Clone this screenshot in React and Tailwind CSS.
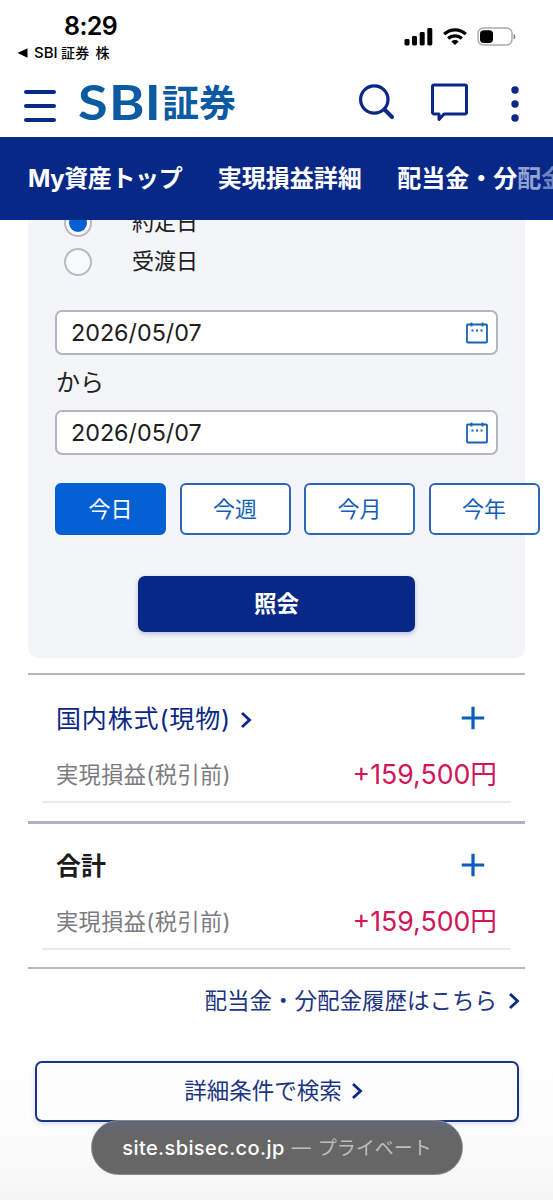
import React from "react";

const JP = "font-['Inter','Noto_Sans_CJK_JP',sans-serif]";

function StatusBar() {
  return (
    <div className="flex h-[70px] justify-between">
      <div className="pl-[17px] pt-[11px] text-black">
        <div className="pl-[47px] text-[25px] font-semibold leading-[30px] tracking-[-0.6px]">8:29</div>
        <div className="flex items-center whitespace-nowrap text-[14px] font-medium leading-[24px]">
          <svg width="11" height="10" viewBox="0 0 11 10" className="mr-[6px]">
            <path d="M0.5 5 10.5 0.3v9.4Z" fill="#000" />
          </svg>
          <span className="w-[27px] text-[15px]">SBI</span>
          <span className="tracking-[0.2px]">証券</span>
          <span className="ml-[6px]">株</span>
        </div>
      </div>
      <div className="flex items-start gap-[10px] pr-[37px] pt-[27px]">
        <svg width="29" height="19" viewBox="0 0 29 19" fill="#000">
          <rect x="0.5" y="12" width="5" height="6.5" rx="1.4" />
          <rect x="8" y="9" width="5" height="9.5" rx="1.4" />
          <rect x="15.7" y="5" width="5" height="13.5" rx="1.4" />
          <rect x="23.3" y="1" width="5" height="17.500" rx="1.4" />
        </svg>
        <svg width="24" height="19" viewBox="0 0 24 19" fill="none" stroke="#000" strokeWidth="3.2">
          <path d="M1.2 7.2a15.5 15.5 0 0 1 21.6 0" />
          <path d="M5.2 11.600a9.8 9.8 0 0 1 13.6 0" />
          <path d="M12 18 8.4 14.4a5.2 5.2 0 0 1 7.2 0Z" fill="#000" stroke="none" />
        </svg>
        <svg width="39" height="20" viewBox="0 0 39 20">
          <rect x="1" y="1" width="34" height="17" rx="5.5" fill="#fff" stroke="#aaa" strokeWidth="1.4" />
          <rect x="3" y="3.3" width="13" height="12.6" rx="3.6" fill="#000" />
          <path d="M37 7.5q2 2 0 4.500Z" fill="#888" stroke="#888" />
        </svg>
      </div>
    </div>
  );
}

function Header() {
  return (
    <header className="flex h-[67px] items-start pl-[24px]">
      <button className="mt-[20px] flex w-[32px] flex-col gap-[10px]" aria-label="メニュー">
        <span className="h-1 w-full rounded-full bg-[#0a2885]" />
        <span className="h-1 w-full rounded-full bg-[#0a2885]" />
        <span className="h-1 w-full rounded-full bg-[#0a2885]" />
      </button>
      <div className="ml-[22px] flex w-[160px] items-start whitespace-nowrap text-[#0b5aa2]">
        <span className="flex w-[84px] origin-left scale-x-[1.15] font-['Lato'] text-[47px] font-bold leading-[64px]">
          <span className="w-[27px]">S</span>
          <span className="w-[31px]">B</span>
          <span>I</span>
        </span>
        <span className="font-['Noto_Sans_CJK_JP'] text-[37px] font-bold leading-[62px]">証券</span>
      </div>
      <svg width="37" height="38" viewBox="0 0 37 38" className="ml-[120px] mt-[14px]" fill="none" stroke="#0a2885" strokeWidth="3.2" strokeLinecap="round">
        <circle cx="16.300" cy="15.500" r="13.700" />
        <path d="m26.500 25.500 7.500 7.500" strokeWidth="4" />
      </svg>
      <svg width="38" height="40" viewBox="0 0 38 40" className="ml-[35px] mt-[13px]" fill="none" stroke="#0a2885" strokeWidth="3" strokeLinejoin="round">
        <path d="M4 2h31a1.500 1.500 0 0 1 1.500 1.500v26a1.500 1.500 0 0 1-1.500 1.500H14l-5 5.500V31H4a1.500 1.500 0 0 1-1.500-1.500v-26A1.500 1.500 0 0 1 4 2Z" />
      </svg>
      <svg width="8" height="38" viewBox="0 0 8 38" className="ml-[43px] mt-[15px]" fill="#0a2885">
        <circle cx="4" cy="5" r="3.700" />
        <circle cx="4" cy="19" r="3.700" />
        <circle cx="4" cy="33" r="3.700" />
      </svg>
    </header>
  );
}

function Nav() {
  return (
    <nav className="relative z-10 flex h-[83px] items-center gap-[35.500px] overflow-hidden whitespace-nowrap bg-[#082887] pl-[28px] pt-[1px] text-[24px] font-bold leading-[36px] text-white">
      <span className="w-[155px] tracking-[-0.4px]">My資産トップ</span>
      <span className="w-[144px]">実現損益詳細</span>
      <span>
        配当金・分<span className="text-[#94a3d2]">配</span><span className="text-[#6f83bf]">金</span>
      </span>
    </nav>
  );
}

function Radio({ label, checked }) {
  return (
    <label className="flex h-[39px] items-center">
      <span className="flex size-[28px] items-center justify-center rounded-full border-2 border-[#b9b9c6] bg-[#f8f9fb]">
        {checked && <span className="size-[18px] rounded-full bg-[#0360d2]" />}
      </span>
      <span className="ml-[40px] text-[22px]">{label}</span>
    </label>
  );
}

function DateField({ value }) {
  return (
    <div className="flex h-[45px] w-[443px] items-center justify-between rounded-[7px] border-2 border-[#b4b4c4] bg-white pl-[14px] pr-[8px]">
      <span className="pt-[2px] text-[23.300px]">{value}</span>
      <svg width="22" height="23" viewBox="0 0 22 23" fill="none" stroke="#1763b5" strokeWidth="1.800" className="mt-[2px]">
        <rect x="1" y="2.500" width="20" height="18" rx="0.800" />
        <path d="M5.500 .5v4M16.500 .5v4" />
        <path d="M5.500 8.500h2m2.500 0h2m2.500 0h2" strokeWidth="2" />
      </svg>
    </div>
  );
}

function Chevron() {
  return (
    <svg width="12" height="18" viewBox="0 0 12 18" fill="none" stroke="#0a2885" strokeWidth="2.800">
      <path d="m2 2 7.500 7L2 16" />
    </svg>
  );
}

function SearchCard() {
  const periods = ["今日", "今週", "今月", "今年"];
  return (
    <section className="-mt-[18px] h-[456px] rounded-[10px] bg-[#f3f5f8] pl-[27px] pt-[1px]">
      <div className="pl-[9px]">
        <Radio label="約定日" checked />
        <Radio label="受渡日" />
      </div>
      <div className="mt-[29px]"><DateField value="2026/05/07" /></div>
      <div className="flex h-[55px] items-center pl-[1px] text-[24px]">から</div>
      <DateField value="2026/05/07" />
      <div className="mt-[28px] flex gap-[13.500px]">
        {periods.map((p, i) => (
          <button
            key={p}
            className={
              "h-[52px] w-[111px] shrink-0 rounded-[6px] border-2 text-[22px] leading-[46px] " +
              (i === 0 ? "border-[#0360d2] bg-[#0360d2] text-white" : "border-[#2b67b5] bg-white text-[#155eb8]")
            }
          >
            {p}
          </button>
        ))}
      </div>
      <button className="ml-[83px] mt-[41px] h-[56px] w-[277px] rounded-[7px] bg-[#082887] text-[22.500px] font-bold text-white shadow-[0_2px_5px_rgba(8,40,135,0.25)]">
        照会
      </button>
    </section>
  );
}

function Result({ title, link }) {
  return (
    <div className="px-[28px]">
      <div className="flex h-[38px] items-center justify-between">
        {link ? (
          <span className="flex items-center gap-[9px] whitespace-nowrap pt-[2px] text-[25px] tracking-[0.850px] text-[#0a2885]">
            {title}
            <Chevron />
          </span>
        ) : (
          <span className="pt-[2px] text-[25px] font-bold text-[#1c1c1c]">{title}</span>
        )}
        <svg width="24" height="24" viewBox="0 0 24 24" className="mb-[3px] mr-[12px]" stroke="#0b5dbd" strokeWidth="3.200">
          <path d="M12 .8v22.400M.8 12h22.400" />
        </svg>
      </div>
      <div className="mx-[-14px] mt-[17px] flex h-[48px] items-start justify-between border-b-2 border-[#e9e9ef] px-[14px] leading-[40px]">
        <span className="whitespace-nowrap text-[22.200px] tracking-[0.400px] text-[#7b7b80]">実現損益(税引前)</span>
        <span className="whitespace-nowrap text-[26.700px] leading-[38px] text-[#d2145a]">+159,500円</span>
      </div>
    </div>
  );
}

export default function App() {
  return (
    <div lang="ja" className={"relative h-[1200px] w-[553px] overflow-hidden bg-white text-[#202020] " + JP}>
      <StatusBar />
      <Header />
      <Nav />
      <main className="mx-[28px]">
        <SearchCard />
        <div className="mt-[15px] h-[2px] bg-[#b4b4c4]" />
        <div className="h-[146px] pt-[25px]"><Result title="国内株式(現物)" link /></div>
        <div className="h-[3px] bg-[#b0b0c0]" />
        <div className="h-[143px] pt-[23px]"><Result title="合計" /></div>
        <div className="h-[2px] bg-[#b8b8bf]" />
        <a className="flex h-[64px] items-center justify-end gap-[11px] whitespace-nowrap pr-[5px] text-[22.500px] text-[#1c3582]">
          配当金・分配金履歴はこちら
          <Chevron />
        </a>
      </main>
      <div className="h-[170px] bg-gradient-to-b from-white via-[#fdfdfd] to-[#f5f5f5] pl-[35px] pt-[28px]">
        <button className="flex h-[61px] w-[484px] items-center justify-center gap-[9px] rounded-[7px] border-2 border-[#1c3582] bg-[#fdfdfe] pb-[1px] pr-[7px] text-[22.500px] text-[#1c3582] shadow-[0_2px_5px_rgba(8,40,135,0.15)]">
          詳細条件で検索
          <Chevron />
        </button>
      </div>
      <div className="absolute left-[91px] top-[1120px] flex h-[55px] w-[372px] items-center justify-center gap-[7px] whitespace-nowrap rounded-full border border-[#8a8a8c] bg-gradient-to-b from-[#63677b] via-[#666] via-30% to-[#666] text-[19px] text-[#bdbdbd]">
        <span className="text-[20px] font-medium tracking-[0.400px] text-white">site.sbisec.co.jp</span>
        <span className="pt-[2px]">—</span>
        <span className="pt-[4px]">プライベート</span>
      </div>
    </div>
  );
}
